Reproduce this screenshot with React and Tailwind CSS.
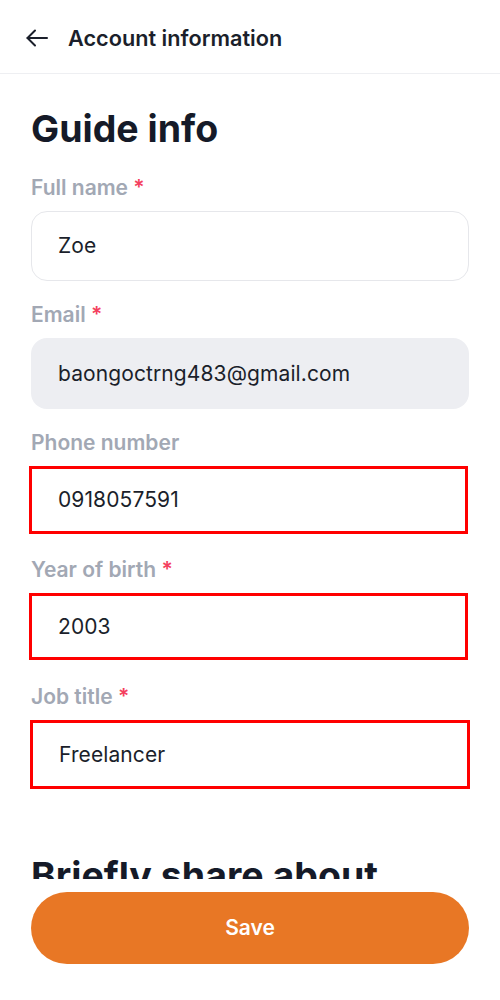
import React from "react";

function Label({ text, required }) {
  return (
    <div className="text-[21px] leading-[26px] font-semibold text-[#a2a8b4]">
      {text}
      {required && <span className="text-[#f43f5e]"> *</span>}
    </div>
  );
}

function Field({ label, required, value, variant, redClass }) {
  const text = "text-[21px] text-[#1b1f2b] tracking-[0.1px]";
  let inner;
  if (variant === "red") {
    inner = (
      <div className="h-[70px]">
        <div className={redClass + " border-[3px] border-[#ff0000] flex items-center pl-[26px] " + text}>
          {value}
        </div>
      </div>
    );
  } else if (variant === "gray") {
    inner = (
      <div className={"h-[71px] bg-[#edeef2] rounded-[16px] flex items-center pl-[27px] " + text}>
        {value}
      </div>
    );
  } else {
    inner = (
      <div className={"h-[70px] border border-[#e6e7eb] rounded-[16px] bg-white flex items-center pl-[26px] " + text}>
        {value}
      </div>
    );
  }
  return (
    <div className="mb-[21px]">
      <Label text={label} required={required} />
      <div className="mt-[10px]">{inner}</div>
    </div>
  );
}

export default function App() {
  return (
    <div
      className="w-[500px] h-[1000px] bg-white flex flex-col overflow-hidden"
      style={{ fontFamily: "Inter, 'Noto Sans', sans-serif" }}
    >
      <div className="h-[74px] shrink-0 flex items-center border-b border-[#eeeff2] px-[25px] pt-[3px]">
        <svg width="24" height="24" viewBox="0 0 24 24" fill="none" stroke="#1b1f2b" strokeWidth="2" strokeLinecap="round" strokeLinejoin="round">
          <path d="M22 12H2.5" />
          <path d="M10 4.5L2.5 12l7.5 7.5" />
        </svg>
        <div className="ml-[19px] text-[21.7px] font-semibold text-[#1b1f2b]">Account information</div>
      </div>
      <div className="flex-1 overflow-hidden px-[31px]">
        <div className="mt-[33px] text-[37.5px] leading-[44px] font-bold text-[#151a28]">Guide info</div>
        <div className="mt-[24px]">
          <Field label="Full name" required value="Zoe" />
          <Field label="Email" required value="baongoctrng483@gmail.com" variant="gray" />
          <Field label="Phone number" value="0918057591" variant="red" redClass="h-[68px] ml-[-2px] mr-[1px]" />
          <Field label="Year of birth" required value="2003" variant="red" redClass="h-[67px] mt-[2px] ml-[-2px] mr-[1px]" />
          <Field label="Job title" required value="Freelancer" variant="red" redClass="h-[69px] mt-[2px] ml-[-1px] mr-[-1px]" />
        </div>
        <div className="mt-[64px] text-[37.5px] leading-[44px] font-bold text-[#151a28]">Briefly share about yourself</div>
      </div>
      <div className="h-[121px] shrink-0 bg-white px-[31px] pt-[13px]">
        <div className="h-[72px] rounded-full bg-[#e87725] flex items-center justify-center text-white text-[21px] font-semibold">
          Save
        </div>
      </div>
    </div>
  );
}
